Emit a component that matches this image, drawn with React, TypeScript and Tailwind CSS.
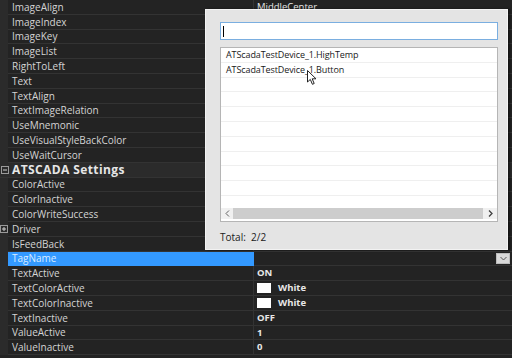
import React from "react";

type Row = {
  name: string;
  value?: string;
  bold?: boolean;
  swatch?: boolean;
  category?: boolean;
  expand?: "minus" | "plus";
  selected?: boolean;
};

const rows: Row[] = [
  { name: "ImageAlign", value: "MiddleCenter" },
  { name: "ImageIndex" },
  { name: "ImageKey" },
  { name: "ImageList" },
  { name: "RightToLeft" },
  { name: "Text" },
  { name: "TextAlign" },
  { name: "TextImageRelation" },
  { name: "UseMnemonic" },
  { name: "UseVisualStyleBackColor" },
  { name: "UseWaitCursor" },
  { name: "ATSCADA Settings", category: true, expand: "minus" },
  { name: "ColorActive" },
  { name: "ColorInactive" },
  { name: "ColorWriteSuccess" },
  { name: "Driver", expand: "plus" },
  { name: "IsFeedBack" },
  { name: "TagName", selected: true },
  { name: "TextActive", value: "ON", bold: true },
  { name: "TextColorActive", value: "White", bold: true, swatch: true },
  { name: "TextColorInactive", value: "White", bold: true, swatch: true },
  { name: "TextInactive", value: "OFF", bold: true },
  { name: "ValueActive", value: "1", bold: true },
  { name: "ValueInactive", value: "0", bold: true },
];

const font = { fontFamily: '"Open Sans", "Noto Sans", sans-serif' };

function ExpandBox({ kind }: { kind: "minus" | "plus" }) {
  return (
    <svg width="8" height="8" viewBox="0 0 8 8" className="block">
      <rect x="0.5" y="0.5" width="7" height="7" fill="none" stroke="#9a9a9a" />
      <line x1="2" y1="4" x2="6" y2="4" stroke="#d0d0d0" />
      {kind === "plus" && <line x1="4" y1="2" x2="4" y2="6" stroke="#d0d0d0" />}
    </svg>
  );
}

function PropRow({ row }: { row: Row }) {
  if (row.category) {
    return (
      <div className="flex h-[14.8px] items-center bg-[#2b2b2b] border-b border-[#333]">
        <div className="w-[10px] flex items-center justify-center">
          {row.expand && <ExpandBox kind={row.expand} />}
        </div>
        <span className="pl-[2px] text-[12px] tracking-[0.4px] font-bold text-[#e6e6e6] leading-none">{row.name}</span>
      </div>
    );
  }
  return (
    <div className="flex h-[14.8px]">
      <div className="w-[8px] bg-[#2b2b2b] flex items-center justify-center">
        {row.expand && <ExpandBox kind={row.expand} />}
      </div>
      <div
        className={`w-[246px] flex items-center pl-[4px] border-b border-r ${
          row.selected ? "bg-[#3399ff] border-[#3399ff] text-[#d9ecff]" : "border-[#333] text-[#d4d4d4]"
        }`}
      >
        <span className="text-[10px] leading-none">{row.name}</span>
      </div>
      <div className="flex-1 flex items-center pl-[3px] border-b border-[#333] relative">
        {row.swatch && <div className="w-[14px] h-[10px] bg-white mr-[7px]" />}
        {row.value && (
          <span className={`text-[9.5px] leading-none text-[#e8e8e8] ${row.bold ? "font-bold" : ""}`}>
            {row.value}
          </span>
        )}
        {row.selected && (
          <div className="absolute right-[2px] top-[1px] w-[14px] h-[11px] bg-[#d9d9d9] border border-[#bcbcbc] flex items-center justify-center">
            <svg width="7" height="5" viewBox="0 0 7 5">
              <path d="M0.5 1 L3.5 4 L6.5 1" fill="none" stroke="#555" strokeWidth="1" />
            </svg>
          </div>
        )}
      </div>
    </div>
  );
}

export default function App() {
  const listLines = Array.from({ length: 11 });
  return (
    <div className="relative w-[512px] h-[358px] overflow-hidden bg-[#232323]" style={font}>
      {/* Property grid */}
      <div className="flex flex-col">
        {rows.map((r) => (
          <PropRow key={r.name} row={r} />
        ))}
      </div>

      {/* Tag picker popup */}
      <div className="absolute left-[205px] top-[9px] w-[303px] h-[241px] bg-[#e4e4e4] border border-[#f2f2f2] shadow-[2px_0_2px_rgba(0,0,0,0.5)] flex flex-col pl-[14px] pr-[10px] pt-[12px]">
        <div className="h-[18px] w-[278px] bg-white border border-[#7aaee0] flex items-center pl-[2px]">
          <div className="w-px h-[11px] bg-black" />
        </div>
        <div className="mt-[7px] w-[278px] h-[175px] bg-white border border-[#b5b5b5] flex flex-col">
          <div className="flex-1 overflow-hidden">
            {["ATScadaTestDevice_1.HighTemp", "ATScadaTestDevice_1.Button"].map((t) => (
              <div key={t} className="h-[14.8px] border-b border-[#efefef] flex items-center pl-[5px]">
                <span className="text-[9px] tracking-[-0.1px] leading-none text-[#1a1a1a]">{t}</span>
              </div>
            ))}
            {listLines.map((_, i) => (
              <div key={i} className="h-[14.8px] border-b border-[#efefef]" />
            ))}
          </div>
          <div className="h-[11px] mb-[2px] flex items-center bg-[#f0f0f0]">
            <div className="w-[12px] flex items-center justify-center">
              <svg width="5" height="7" viewBox="0 0 5 7">
                <path d="M4 0.5 L1 3.5 L4 6.5" fill="none" stroke="#606060" />
              </svg>
            </div>
            <div className="flex-1 h-full bg-[#cdcdcd]" />
            <div className="w-[14px] flex items-center justify-center">
              <svg width="5" height="7" viewBox="0 0 5 7">
                <path d="M1 0.5 L4 3.5 L1 6.5" fill="none" stroke="#404040" strokeWidth="1.3" />
              </svg>
            </div>
          </div>
        </div>
        <div className="mt-[10px] text-[10px] leading-none text-[#1a1a1a]">Total:&nbsp; 2/2</div>
      </div>

      {/* Mouse cursor */}
      <svg className="absolute left-[307px] top-[70px]" width="11" height="16" viewBox="0 0 11 16">
        <path d="M0.5 0.5 L0.5 12 L3.3 9.4 L5.4 14.3 L7.2 13.5 L5.2 8.8 L9 8.8 Z" fill="white" stroke="#222" strokeWidth="1" />
      </svg>
    </div>
  );
}
